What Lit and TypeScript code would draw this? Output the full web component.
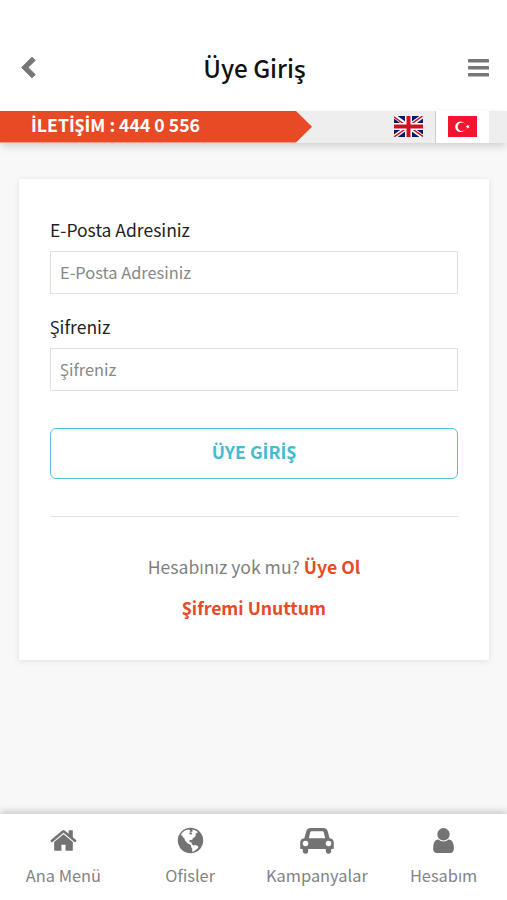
import { LitElement, html, css, svg } from "lit";
import { customElement } from "lit/decorators.js";

const home = svg`<svg class="icon" viewBox="0 0 1792 1792"><path d="M1472 992v480q0 26-19 45t-45 19h-384v-384h-256v384h-384q-26 0-45-19t-19-45v-480q0-1 .5-3t.5-3l575-474 575 474q1 2 1 6zm223-69l-62 74q-8 9-21 11h-3q-13 0-21-7l-692-577-692 577q-12 8-24 7-13-2-21-11l-62-74q-8-10-7-23.5t11-21.5l719-599q32-26 76-26t76 26l244 204v-195q0-14 9-23t23-9h192q14 0 23 9t9 23v408l219 182q10 8 11 21.5t-7 23.5z"/></svg>`;

const globe = svg`<svg class="icon" viewBox="0 0 29 29"><circle cx="14.5" cy="14.5" r="12.7"/><path fill="#fff" d="M4.6 9.2 6.6 6.2 9.4 4.2 12.6 3.4 14.2 4.2 13.6 5.4 15 6.1 16.8 5.2 16.2 3.6 19.6 4.4 21.8 6 20.8 7.2 19.4 7.8 19.8 9.8 18.2 11.4 16.8 12.2 16.2 14 14.8 13.8 13.4 14.4 13.6 16.2 15.4 16.2 15.8 18 17.4 19.4 19.4 19 21.8 20 22.4 21.2 20.8 23.2 18 25.2 16 25.7 16.4 23 15 20.8 15.2 19.4 13.4 18.2 11.2 17 9 14.4 8.4 12.2 6.8 11.2 6.4 9.6Z"/><path d="M13.2 6.8l1.900-.5 1.300 1.100-1.200 1.100-1.700-.3z"/></svg>`;

const car = svg`<svg class="icon car" viewBox="0 0 34 29"><path fill-rule="evenodd" d="M10.800 2h12.400q3.600 0 4.600 3.400l1.800 6.800q4.200.4 4.200 4.600v5.400q0 .8-.8.8h-1.800v1.800q0 3-2.700 3t-2.700-3V23H8.200v1.800q0 3-2.700 3t-2.700-3V23H1q-.8 0-.8-.8v-5.400q0-4.200 4.200-4.600l1.800-6.800Q7.200 2 10.800 2ZM11.600 5.200q-1 0-1.300 1L8.800 12.200h16.400L23.700 6.200q-.3-1-1.300-1ZM5.500 14.700a2.800 2.800 0 1 0 0 5.600 2.800 2.800 0 0 0 0-5.600Zm23 0a2.800 2.800 0 1 0 0 5.600 2.800 2.800 0 0 0 0-5.600Z"/></svg>`;

const user = svg`<svg class="icon" viewBox="0 0 1792 1792"><path d="M1536 1399q0 109-62.500 187t-150.500 78h-854q-88 0-150.500-78t-62.500-187q0-85 8.500-160.500t31.500-152 58.500-131 94-89 134.500-34.500q131 128 313 128t313-128q76 0 134.500 34.500t94 89 58.500 131 31.500 152 8.500 160.500zm-256-887q0 159-112.500 271.500t-271.500 112.500-271.500-112.500-112.500-271.500 112.500-271.500 271.500-112.500 271.500 112.500 112.500 271.500z"/></svg>`;

const tabs = [
  { icon: home, label: "Ana Menü" },
  { icon: globe, label: "Ofisler" },
  { icon: car, label: "Kampanyalar" },
  { icon: user, label: "Hesabım" },
];

// The main family lacks a proper dotted capital I, so that letter gets its own face.
const dotted = (text: string) =>
  text.split(/(İ)/).map((part) => (part === "İ" ? html`<span class="dotted">İ</span>` : part));

@customElement("app-root")
export class AppRoot extends LitElement {
  static styles = css`
    :host {
      display: flex;
      flex-direction: column;
      height: 900px;
      background: #f8f8f8;
      font-family: "Noto Sans CJK SC", "Open Sans", sans-serif;
      color: #222;
      overflow: hidden;
    }
    * { box-sizing: border-box; }
    .dotted { font-family: "Open Sans", sans-serif; line-height: 1; }
    .header {
      height: 111px;
      flex: none;
      background: #fff;
      padding: 24px 18px 0 20px;
      display: grid;
      grid-template-columns: 40px 1fr 40px;
      align-items: center;
    }
    .back { width: 17px; height: 23px; fill: #777; }
    .title {
      margin: 0;
      text-align: center;
      font-size: 24.2px;
      line-height: 36px;
      font-weight: 500;
      color: #111;
    }
    .cedilla { font-family: "Open Sans", sans-serif; font-weight: 600; line-height: 1; }
    .menu { justify-self: end; width: 21px; height: 18px; fill: #777; }
    .strip {
      height: 31.5px;
      flex: none;
      display: flex;
      background: #eee;
      box-shadow: 0 4px 8px -1px rgba(0, 0, 0, 0.17);
    }
    .phone {
      width: 312px;
      padding-left: 31px;
      background: #e84a25;
      clip-path: polygon(0 0, 296px 0, 100% 50%, 296px 100%, 0 100%);
      color: #fff;
      font-weight: 700;
      font-size: 17.65px;
      line-height: 28px;
      white-space: nowrap;
    }
    .flags { margin-left: auto; margin-right: 18px; display: flex; }
    .flag { width: 53px; display: flex; align-items: center; justify-content: center; }
    .flag svg { width: 29px; height: 21px; display: block; }
    .flag.active { background: #fff; border-left: 1px solid #ccc; width: 54px; }
    .card {
      margin: 36px 18px 0 19px;
      height: 481.5px;
      padding: 37px 31px 0;
      background: #fff;
      box-shadow: 0 1px 6px rgba(0, 0, 0, 0.1);
    }
    .label { display: block; font-size: 17.5px; line-height: 28px; height: 28px; margin-bottom: 7px; }
    .input {
      display: block;
      width: 100%;
      height: 43px;
      margin: 0 0 19px;
      padding: 0 9px;
      border: 1px solid #e0e0e0;
      border-radius: 0;
      background: #fff;
      font: inherit;
      font-size: 16.4px;
      outline: none;
    }
    .input::placeholder { color: #858889; opacity: 1; }
    .submit {
      display: block;
      width: 100%;
      height: 51px;
      margin-top: 37px;
      border: 1.5px solid #56c1cf;
      border-radius: 6px;
      background: #fff;
      color: #45bccd;
      font: inherit;
      font-size: 17.7px;
      font-weight: 700;
      line-height: 44px;
      padding: 0 0 5px;
    }
    .links { margin-top: 37px; padding-top: 36px; border-top: 1px solid #e2e2e2; text-align: center; font-size: 17.6px; }
    .line { margin: 0; height: 41.5px; line-height: 28px; color: #808080; }
    .link { color: #e44b27; font-weight: 700; }
    .tabs {
      margin-top: auto;
      height: 86px;
      flex: none;
      display: grid;
      grid-template-columns: repeat(4, 1fr);
      background: #fff;
      box-shadow: 0 -3px 7px rgba(0, 0, 0, 0.18);
    }
    .tab { display: flex; flex-direction: column; align-items: center; padding-top: 12px; color: #838383; font-size: 16.4px; line-height: 28px; white-space: nowrap; }
    .icon { width: 29px; height: 29px; fill: #737373; margin-bottom: 6px; flex: none; display: block; }
    .car { width: 34px; }
  `;

  render() {
    return html`
      <header class="header">
        <svg class="back" viewBox="0 0 17 23"><path d="M12 1.2 15.2 4.4 8 11.5 15.2 18.6 12 21.8 1.7 11.5Z" stroke="#777" stroke-width="1" stroke-linejoin="round"/></svg>
        <h1 class="title">Üye Giri<span class="cedilla">ş</span></h1>
        <svg class="menu" viewBox="0 0 21 18"><rect y="0" width="21" height="3.6" rx=".5"/><rect y="7" width="21" height="3.6" rx=".5"/><rect y="14" width="21" height="3.6" rx=".5"/></svg>
      </header>
      <div class="strip">
        <div class="phone">${dotted("İLETİŞİM : 444 0 556")}</div>
        <div class="flags">
          <div class="flag">
            <svg viewBox="0 0 29 21"><path fill="#0a1570" d="M0 0h29v21H0z"/><path stroke="#fff" stroke-width="4.2" d="M0 0 29 21M29 0 0 21"/><path stroke="#cf1126" stroke-width="1.5" d="M0 .8 12 9.5M28.5 0 17 8.3M0 21 12 12.5M29 20.5 17 12"/><path stroke="#fff" stroke-width="7" d="M14.5 0v21M0 10.5h29"/><path stroke="#cf1020" stroke-width="4" d="M14.5 0v21M0 10.5h29"/></svg>
          </div>
          <div class="flag active">
            <svg viewBox="0 0 29 21"><path fill="#f5142f" d="M0 0h29v21H0z"/><circle cx="12.5" cy="10.7" r="5.3" fill="#fff"/><circle cx="14" cy="10.7" r="4.3" fill="#f5142f"/><path fill="#fff" d="m17.2 10.7 1.700-.5v-1.800l1.100 1.400 1.700-.5-1 1.400 1 1.400-1.700-.5-1.100 1.400v-1.800z"/></svg>
          </div>
        </div>
      </div>
      <main class="card">
        <label class="label">E-Posta Adresiniz</label>
        <input class="input" placeholder="E-Posta Adresiniz" />
        <label class="label">Şifreniz</label>
        <input class="input" type="password" placeholder="Şifreniz" />
        <button class="submit">${dotted("ÜYE GİRİŞ")}</button>
        <div class="links">
          <p class="line">Hesabınız yok mu? <span class="link">Üye Ol</span></p>
          <p class="line"><span class="link">Şifremi Unuttum</span></p>
        </div>
      </main>
      <nav class="tabs">
        ${tabs.map((t) => html`<div class="tab">${t.icon}<span>${t.label}</span></div>`)}
      </nav>
    `;
  }
}
